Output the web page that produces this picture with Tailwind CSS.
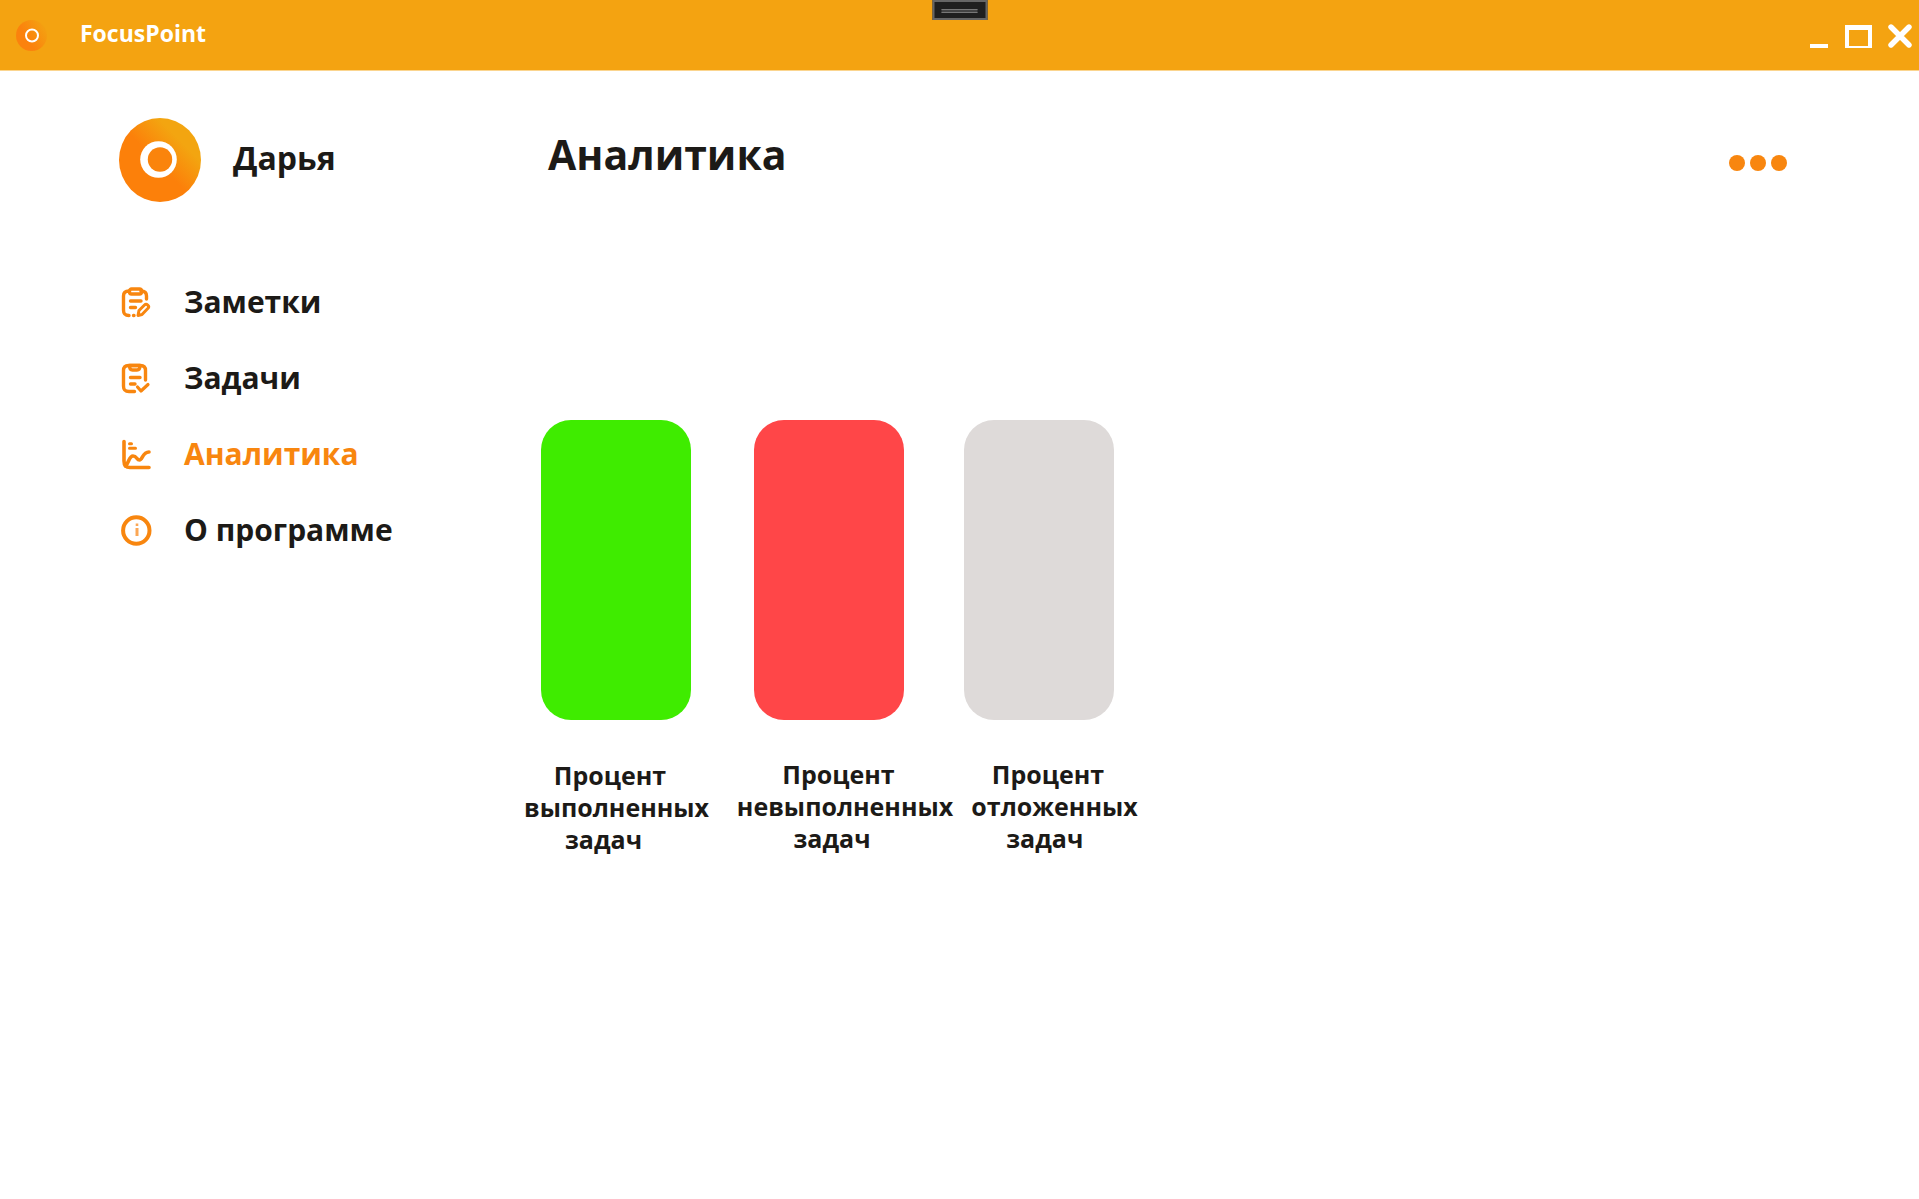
<!DOCTYPE html>
<html lang="ru">
<head>
<meta charset="utf-8">
<title>FocusPoint</title>
<script src="https://cdn.jsdelivr.net/npm/@tailwindcss/browser@4"></script>
</head>
<body class="min-h-screen bg-white font-['Open_Sans','Noto_Sans',sans-serif] font-bold text-[#1c1a17]">
  <header class="relative flex h-[71px] items-center border-b border-[#fbd58f] bg-[#f4a311] pl-4 pr-[7px]">
    <svg class="h-8 w-8" viewBox="0 0 32 32" aria-hidden="true">
      <defs><linearGradient id="small" x1="0.1" y1="0.7" x2="0.9" y2="0.2"><stop offset="0.3" stop-color="#fb820d"/><stop offset="1" stop-color="#f4a011"/></linearGradient></defs>
      <circle cx="15.5" cy="16.5" r="15.5" fill="url(#small)"/>
      <circle cx="16" cy="16.500" r="6" fill="none" stroke="#fff" stroke-width="2"/>
    </svg>
    <span class="ml-8 pb-1 text-[23px] leading-8 text-white">FocusPoint</span>
    <div class="absolute left-1/2 top-0 flex h-5 w-[55px] -translate-x-1/2 items-center justify-center border-2 border-[#666] bg-[#1f1f1f]">
      <span class="mt-[2px] h-1 w-9 border-y border-[#777] bg-[#444]"></span>
    </div>
    <div class="ml-auto flex items-center gap-4 pt-[2px]">
      <button aria-label="Свернуть"><svg class="h-6 w-5" viewBox="0 0 20 24"><rect x="1" y="20" width="18" height="4" fill="#fff"/></svg></button>
      <button aria-label="Развернуть"><svg class="h-6 w-[27px]" viewBox="0 0 27 24"><path fill="#fff" fill-rule="evenodd" d="M0 1h27v23H0zM4 6v16h19V6z"/></svg></button>
      <button aria-label="Закрыть"><svg class="h-6 w-6" viewBox="0 0 24 24"><path d="M3 3l18 18M21 3L3 21" stroke="#fff" stroke-width="5.4" stroke-linecap="round"/></svg></button>
    </div>
  </header>

  <div class="flex">
    <aside class="w-[520px] shrink-0 pl-[119px] pt-[47px]">
      <div class="flex items-center gap-8">
        <svg class="h-[84px] w-[82px]" viewBox="0 0 82 84" aria-hidden="true">
          <defs><linearGradient id="avatar" x1="0.2" y1="0.8" x2="0.8" y2="0.2"><stop offset="0.45" stop-color="#fc800a"/><stop offset="0.9" stop-color="#f3a510"/></linearGradient></defs>
          <ellipse cx="41" cy="42" rx="41" ry="42" fill="url(#avatar)"/>
          <circle cx="39.500" cy="41.500" r="18.300" fill="#fff"/>
          <circle cx="41" cy="41.500" r="12.200" fill="#fa840c"/>
        </svg>
        <span class="pb-1 text-[32px] leading-10">Дарья</span>
      </div>
      <nav class="mt-[62px] flex flex-col pl-px text-[30px] leading-[76px] text-[#1c1a17]">
        <a href="#notes" class="flex items-center gap-8">
          <svg class="h-8 w-8" viewBox="0 0 32 32" fill="none" stroke="#f8860f" stroke-width="3.400" stroke-linecap="round" stroke-linejoin="round">
            <path d="M9 5C5 5 3.500 6.500 3.500 10V24C3.500 28 5 29.500 9 29.500M13.500 29.500h.5M21 5c4 0 5.500 1.500 5.500 5v3"/>
            <rect x="9.500" y="3" width="12" height="5" rx="2"/>
            <path d="M10.500 15H21M10.500 21.500H15.500"/>
            <path d="M18 29.500l1-5 5.500-5.500c2-2 5.500 1 3.500 3.300L22 28.500z" fill="#fff" stroke-width="3"/>
          </svg>Заметки</a>
        <a href="#tasks" class="flex items-center gap-8">
          <svg class="h-8 w-8" viewBox="0 0 32 32" fill="none" stroke="#f8860f" stroke-width="3.400" stroke-linecap="round" stroke-linejoin="round">
            <path d="M14.500 29.500H9C5 29.500 3.500 28 3.500 24V8.500C3.500 5 5 3.500 8.500 3.500H20.500C24 3.500 25.500 5 25.500 8.500V18"/>
            <path d="M9.500 3.500C9.500 7 10.500 8 12.500 8H17C19 8 20 7 20 3.500z"/>
            <path d="M10.500 15.500H20M10.500 22H15"/>
            <path d="M17.500 25l3.500 4 7-6.500" stroke-width="3.200"/>
          </svg>Задачи</a>
        <a href="#analytics" aria-current="page" class="flex items-center gap-8 text-[#f8860f]">
          <svg class="h-8 w-8" viewBox="0 0 32 32" fill="none" stroke="#f8860f" stroke-width="3.600" stroke-linecap="round" stroke-linejoin="round">
            <path d="M4 3.500V23C4 27.500 6 29.500 10 29.500H29"/>
            <path d="M5.500 28C9 25 9 18 13 18S16.500 22 19.500 22S22.500 14 29 14"/>
            <path d="M9.500 5.800H11.500M9.500 10.300H15.500" stroke-width="3"/>
          </svg>Аналитика</a>
        <a href="#about" class="flex items-center gap-8">
          <svg class="h-8 w-8" viewBox="0 0 32 32" fill="none" stroke="#f8860f">
            <circle cx="16.300" cy="16.500" r="13.200" stroke-width="4"/>
            <path d="M17 14v8" stroke="#fba755" stroke-width="3"/>
            <path d="M17 9.500v2.500" stroke="#fba755" stroke-width="2.600"/>
          </svg>О программе</a>
      </nav>
    </aside>

    <main class="flex-1 pt-[53px]">
      <div class="flex items-center justify-between pl-7 pr-[132px]">
        <h1 class="text-[41px] leading-[60px]">Аналитика</h1>
        <button aria-label="Меню" class="mt-[18px] flex gap-[5px]">
          <span class="h-4 w-4 rounded-full bg-[#f8860f]"></span>
          <span class="h-4 w-4 rounded-full bg-[#f8860f]"></span>
          <span class="h-4 w-4 rounded-full bg-[#f8860f]"></span>
        </button>
      </div>
      <section class="mt-[236px] flex pl-[21px] text-center text-[25px] leading-8">
        <figure class="w-[213px]">
          <div class="h-[300px] w-[150px] rounded-[30px] bg-[#3fec00]"></div>
          <figcaption class="-ml-[31px] mt-[39px] w-[213px] whitespace-pre">Процент  
выполненных
задач    </figcaption>
        </figure>
        <figure class="w-[210px]">
          <div class="h-[300px] w-[150px] rounded-[30px] bg-[#ff4648]"></div>
          <figcaption class="-ml-[31px] mt-[38px] w-[244px] whitespace-pre">Процент  
невыполненных
задач    </figcaption>
        </figure>
        <figure class="w-[213px]">
          <div class="h-[300px] w-[150px] rounded-[30px] bg-[#dedad9]"></div>
          <figcaption class="-ml-4 mt-[38px] w-[213px] whitespace-pre">Процент  
отложенных
задач   </figcaption>
        </figure>
      </section>
    </main>
  </div>
</body>
</html>
